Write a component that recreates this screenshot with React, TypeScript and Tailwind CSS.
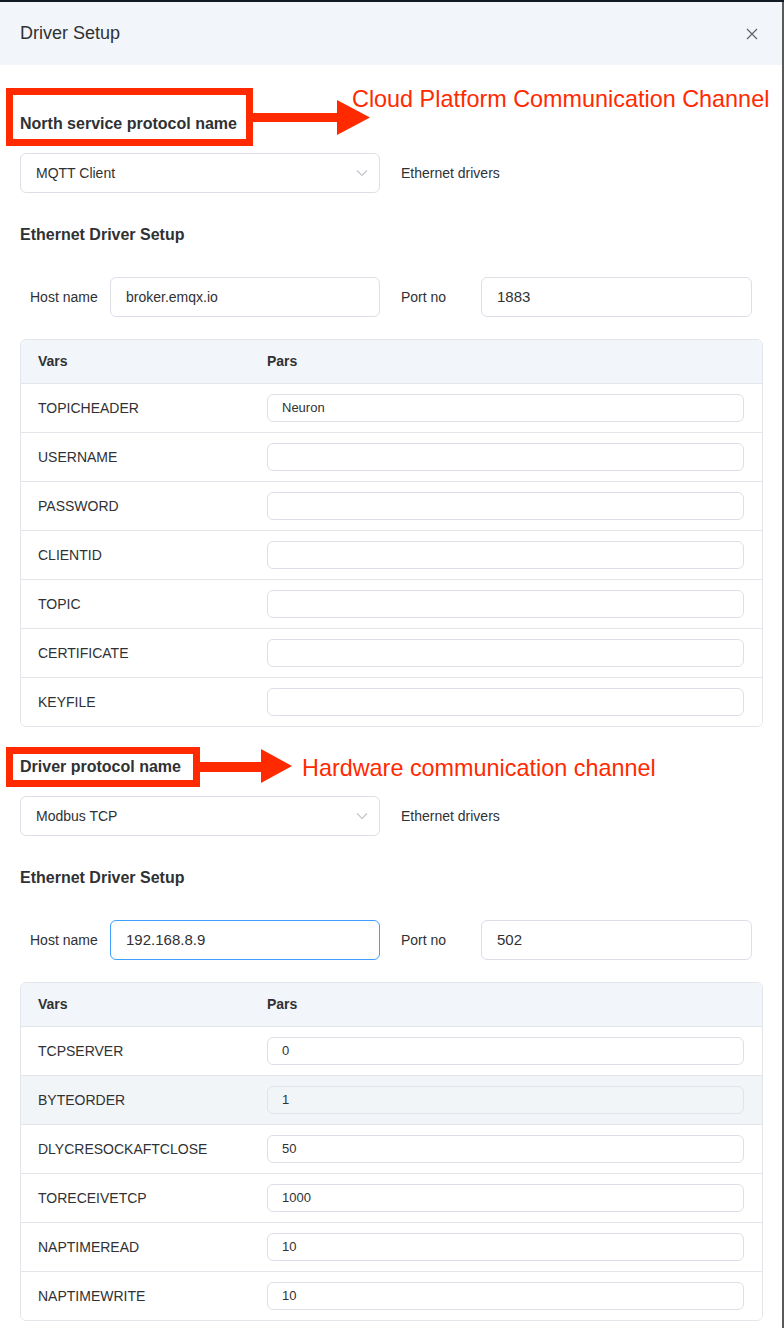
import React from "react";

const RED = "#ff2a00";

function Chevron() {
  return (
    <svg width="12" height="8" viewBox="0 0 12 8" fill="none">
      <polyline points="1,1.5 6,6.5 11,1.5" stroke="#c0c4cc" strokeWidth="1.1" />
    </svg>
  );
}

function SelectBox({ value }: { value: string }) {
  return (
    <div className="flex items-center">
      <div className="w-[360px] h-[40px] rounded-[6px] border border-[#dcdfe6] bg-white flex items-center justify-between pl-[15px] pr-[11px] text-[14px] text-[#303133]">
        <span>{value}</span>
        <Chevron />
      </div>
      <span className="ml-[21px] text-[14px] text-[#303133]">Ethernet drivers</span>
    </div>
  );
}

function HostRow({ host, port, focused, numeric }: { host: string; port: string; focused?: boolean; numeric?: boolean }) {
  return (
    <div className="flex items-center h-[40px]">
      <span className="pl-[10px] w-[90px] text-[14px] text-[#303133]">Host name</span>
      <div
        className={
          focused
            ? "w-[270px] h-[40px] rounded-[6px] border border-[#409eff] flex items-center pl-[15px] text-[#303133]"
            : "w-[270px] h-[40px] rounded-[6px] border border-[#dcdfe6] flex items-center pl-[15px] text-[#303133]"
        }
      >
        <span className={numeric ? "text-[15px]" : "text-[14px]"}>{host}</span>
      </div>
      <span className="ml-[21px] w-[80px] text-[14px] text-[#303133]">Port no</span>
      <div className="w-[271px] h-[40px] rounded-[6px] border border-[#dcdfe6] flex items-center pl-[15px] text-[#303133]">
        <span className="text-[15px]">{port}</span>
      </div>
    </div>
  );
}

type Row = { name: string; value: string; hover?: boolean };

function VarTable({ rows }: { rows: Row[] }) {
  return (
    <div className="w-[743px] rounded-[6px] border border-[#e2e6eb] overflow-hidden">
      <div className="h-[43px] bg-[#f2f6fa] flex items-center text-[14px] font-bold text-[#303133]">
        <span className="pl-[17px] w-[246px]">Vars</span>
        <span>Pars</span>
      </div>
      {rows.map((r) => (
        <div
          key={r.name}
          className={
            r.hover
              ? "h-[49px] border-t border-[#e2e6eb] bg-[#f2f5f8] flex items-center text-[14px] text-[#303133]"
              : "h-[49px] border-t border-[#e2e6eb] bg-white flex items-center text-[14px] text-[#303133]"
          }
        >
          <span className="pl-[17px] w-[246px]">{r.name}</span>
          <div
            className={
              r.hover
                ? "w-[477px] h-[28px] rounded-[6px] border border-[#e0e4ea] bg-[#f2f5f8] flex items-center pl-[14px] text-[13px] text-[#303133]"
                : "w-[477px] h-[28px] rounded-[6px] border border-[#dcdfe6] bg-white flex items-center pl-[14px] text-[13px] text-[#303133]"
            }
          >
            {r.value}
          </div>
        </div>
      ))}
    </div>
  );
}

export default function App() {
  const mqttRows: Row[] = [
    { name: "TOPICHEADER", value: "Neuron" },
    { name: "USERNAME", value: "" },
    { name: "PASSWORD", value: "" },
    { name: "CLIENTID", value: "" },
    { name: "TOPIC", value: "" },
    { name: "CERTIFICATE", value: "" },
    { name: "KEYFILE", value: "" },
  ];
  const modbusRows: Row[] = [
    { name: "TCPSERVER", value: "0" },
    { name: "BYTEORDER", value: "1", hover: true },
    { name: "DLYCRESOCKAFTCLOSE", value: "50" },
    { name: "TORECEIVETCP", value: "1000" },
    { name: "NAPTIMEREAD", value: "10" },
    { name: "NAPTIMEWRITE", value: "10" },
  ];

  return (
    <div
      className="w-[784px] h-[1328px] bg-white overflow-hidden relative"
      style={{ fontFamily: '"Liberation Sans", Arial, sans-serif' }}
    >
      <div className="h-[2px] bg-[#121a24]" />
      <div className="flex h-[1326px]">
        <div className="w-[782px] flex flex-col">
          {/* Header */}
          <div className="h-[63px] bg-[#f2f6fa] flex items-center justify-between pl-[20px] pr-[24px]">
            <span className="text-[18px] text-[#303133]">Driver Setup</span>
            <svg width="12" height="12" viewBox="0 0 12 12" fill="none">
              <path d="M1 1L11 11M11 1L1 11" stroke="#606266" strokeWidth="1.2" />
            </svg>
          </div>

          {/* Body */}
          <div className="px-[20px] flex flex-col">
            {/* North label with annotation */}
            <div className="relative mt-[49px] h-[20px] leading-[20px] text-[16px] font-bold text-[#303133]">
              North service protocol name
              <div className="absolute left-[-14px] top-[-26px] w-[247px] h-[58px] border-[7px] border-[#ff2a00]" />
              <svg className="absolute left-[233px] top-[-14px]" width="117" height="35" viewBox="0 0 117 35">
                <rect x="0" y="13" width="88" height="9" fill={RED} />
                <polygon points="84,0 117,17.5 84,35" fill={RED} />
              </svg>
              <span className="absolute left-[332px] top-[-28px] leading-[26px] text-[23.4px] font-normal whitespace-nowrap text-[#ff2a00]">
                Cloud Platform Communication Channel
              </span>
            </div>

            <div className="mt-[19px]">
              <SelectBox value="MQTT Client" />
            </div>

            <div className="mt-[32px] h-[20px] leading-[20px] text-[16px] font-bold text-[#303133]">
              Ethernet Driver Setup
            </div>

            <div className="mt-[32px]">
              <HostRow host="broker.emqx.io" port="1883" />
            </div>

            <div className="mt-[22px]">
              <VarTable rows={mqttRows} />
            </div>

            {/* Driver label with annotation */}
            <div className="relative mt-[30px] h-[20px] leading-[20px] text-[16px] font-bold text-[#303133]">
              Driver protocol name
              <div className="absolute left-[-14px] top-[-10px] w-[194px] h-[40px] border-[7px] border-[#ff2a00]" />
              <svg className="absolute left-[180px] top-[-8px]" width="92" height="34" viewBox="0 0 92 34">
                <rect x="0" y="13" width="64" height="10" fill={RED} />
                <polygon points="61,0 92,17 61,34" fill={RED} />
              </svg>
              <span className="absolute left-[282px] top-[-2px] leading-[26px] text-[23.4px] font-normal whitespace-nowrap text-[#ff2a00]">
                Hardware communication channel
              </span>
            </div>

            <div className="mt-[19px]">
              <SelectBox value="Modbus TCP" />
            </div>

            <div className="mt-[32px] h-[20px] leading-[20px] text-[16px] font-bold text-[#303133]">
              Ethernet Driver Setup
            </div>

            <div className="mt-[32px]">
              <HostRow host="192.168.8.9" port="502" focused numeric />
            </div>

            <div className="mt-[22px]">
              <VarTable rows={modbusRows} />
            </div>
          </div>
        </div>
        <div className="w-[2px] bg-[#5a5a5a]" />
      </div>
    </div>
  );
}
